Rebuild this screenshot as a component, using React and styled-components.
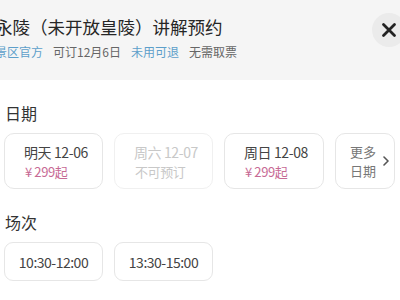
import React from 'react'
import styled, { createGlobalStyle } from 'styled-components'

const GlobalStyle = createGlobalStyle`
html, body {
  margin: 0;
  padding: 0;
  background: #fff;
  overflow: hidden;
  font-family: "Noto Sans CJK SC", "Noto Sans", sans-serif;
}
`

const Page = styled.div`
width: 400px;
height: 300px;
overflow: hidden;
background: #fff;
`

const Header = styled.div`
height: 80px;
background: #f5f5f5;
display: flex;
justify-content: space-between;
align-items: flex-start;
`

const TitleBlock = styled.div`
margin-left: -5px;
padding-top: 15px;
`

const Title = styled.div`
font-size: 17.5px;
line-height: 24px;
color: #262626;
white-space: nowrap;
`

const Tags = styled.div`
display: flex;
gap: 10px;
margin-top: 5px;
font-size: 12px;
line-height: 16px;
`

const Tag = styled.span`
color: ${(props) => (props.blue ? '#5d9fca' : '#666')};
`

const CloseButton = styled.div`
width: 34px;
height: 34px;
border-radius: 50%;
background: #ebebeb;
margin-top: 13px;
margin-right: -6px;
display: flex;
align-items: center;
justify-content: center;
flex-shrink: 0;
`

const Section = styled.div`
padding: 23px 0 0 4px;
`

const Label = styled.div`
font-size: 16px;
line-height: 20px;
color: #333;
padding-left: 1px;
margin-bottom: 10px;
`

const Row = styled.div`
display: flex;
gap: 11px;
`

const DateCard = styled.div`
box-sizing: border-box;
width: ${(props) => props.w || 99}px;
height: 56px;
border: 1px solid ${(props) => (props.disabled ? '#f0f0f0' : '#e6e6e6')};
border-radius: 10px;
padding: 9px 0 0 19px;
font-size: 14px;
line-height: 19px;
letter-spacing: -0.4px;
color: ${(props) => (props.disabled ? '#c8c8c8' : '#444')};
flex-shrink: 0;
`

const Price = styled.div`
color: ${(props) => (props.disabled ? '#c8c8c8' : '#c76a95')};
font-size: 13px;
padding-left: 1px;
`

const MoreCard = styled.div`
box-sizing: border-box;
width: 60px;
height: 56px;
border: 1px solid #e6e6e6;
border-radius: 10px;
padding-left: 14px;
display: flex;
align-items: center;
gap: 7px;
font-size: 13px;
line-height: 19px;
color: #777;
flex-shrink: 0;
`

const TimeCard = styled.div`
box-sizing: border-box;
width: 99px;
height: 39px;
border: 1px solid #e6e6e6;
border-radius: 9px;
display: flex;
align-items: center;
justify-content: center;
font-size: 14px;
letter-spacing: -0.5px;
color: #444;
`

const dates = [
  { day: '明天 12-06', sub: '¥ 299起' },
  { day: '周六 12-07', sub: '不可预订', disabled: true },
  { day: '周日 12-08', sub: '¥ 299起', w: 100 },
]

const times = ['10:30-12:00', '13:30-15:00']

export default function App() {
  return (
    <Page>
      <GlobalStyle />
      <Header>
        <TitleBlock>
          <Title>永陵（未开放皇陵）讲解预约</Title>
          <Tags>
            <Tag blue>景区官方</Tag>
            <Tag>可订12月6日</Tag>
            <Tag blue>未用可退</Tag>
            <Tag>无需取票</Tag>
          </Tags>
        </TitleBlock>
        <CloseButton>
          <svg width="16" height="16" viewBox="0 0 16 16">
            <path d="M2.5 2.5 L13.5 13.5 M13.5 2.5 L2.5 13.5" stroke="#222" strokeWidth="2.8" strokeLinecap="round" />
          </svg>
        </CloseButton>
      </Header>

      <Section>
        <Label>日期</Label>
        <Row>
          {dates.map((d) => (
            <DateCard key={d.day} disabled={d.disabled} w={d.w}>
              <div>{d.day}</div>
              <Price disabled={d.disabled}>{d.sub}</Price>
            </DateCard>
          ))}
          <MoreCard>
            <div>
              <div>更多</div>
              <div>日期</div>
            </div>
            <svg width="6" height="10" viewBox="0 0 6 10">
              <path d="M1 1 L5 5 L1 9" fill="none" stroke="#555" strokeWidth="1.6" strokeLinecap="round" strokeLinejoin="round" />
            </svg>
          </MoreCard>
        </Row>
      </Section>

      <Section>
        <Label>场次</Label>
        <Row>
          {times.map((t) => (
            <TimeCard key={t}>{t}</TimeCard>
          ))}
        </Row>
      </Section>
    </Page>
  )
}
